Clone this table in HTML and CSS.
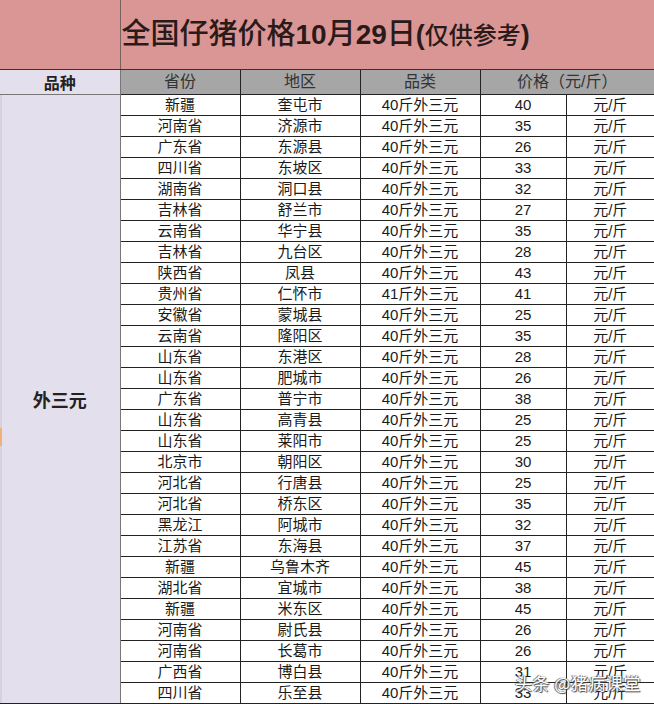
FILE: index.html
```html
<!DOCTYPE html>
<html lang="zh">
<head>
<meta charset="utf-8">
<title>全国仔猪价格</title>
<link rel="stylesheet" href="styles.css">
</head>
<body>
<div class="sheet">
<table class="grid">
<colgroup>
<col class="c1"><col class="c2"><col class="c3"><col class="c4"><col class="c5"><col class="c6">
</colgroup>
<tr class="title-row">
<td class="title-left"></td>
<td class="title" colspan="5"><span class="t-cjk">全国仔猪价格</span><b class="t-num">10</b><span class="t-cjk">月</span><b class="t-num">29</b><span class="t-cjk">日</span><b class="t-par">(</b><span class="t-small">仅供参考</span><b class="t-par">)</b></td>
</tr>
<tr class="head-row">
<td class="kind-head">品种</td>
<td class="head">省份</td>
<td class="head">地区</td>
<td class="head">品类</td>
<td class="head" colspan="2">价格（元/斤）</td>
</tr>
<tr><td class="kind" rowspan="29">外三元</td><td>新疆</td><td>奎屯市</td><td>40斤外三元</td><td>40</td><td>元/斤</td></tr>
<tr><td>河南省</td><td>济源市</td><td>40斤外三元</td><td>35</td><td>元/斤</td></tr>
<tr><td>广东省</td><td>东源县</td><td>40斤外三元</td><td>26</td><td>元/斤</td></tr>
<tr><td>四川省</td><td>东坡区</td><td>40斤外三元</td><td>33</td><td>元/斤</td></tr>
<tr><td>湖南省</td><td>洞口县</td><td>40斤外三元</td><td>32</td><td>元/斤</td></tr>
<tr><td>吉林省</td><td>舒兰市</td><td>40斤外三元</td><td>27</td><td>元/斤</td></tr>
<tr><td>云南省</td><td>华宁县</td><td>40斤外三元</td><td>35</td><td>元/斤</td></tr>
<tr><td>吉林省</td><td>九台区</td><td>40斤外三元</td><td>28</td><td>元/斤</td></tr>
<tr><td>陕西省</td><td>凤县</td><td>40斤外三元</td><td>43</td><td>元/斤</td></tr>
<tr><td>贵州省</td><td>仁怀市</td><td>41斤外三元</td><td>41</td><td>元/斤</td></tr>
<tr><td>安徽省</td><td>蒙城县</td><td>40斤外三元</td><td>25</td><td>元/斤</td></tr>
<tr><td>云南省</td><td>隆阳区</td><td>40斤外三元</td><td>35</td><td>元/斤</td></tr>
<tr><td>山东省</td><td>东港区</td><td>40斤外三元</td><td>28</td><td>元/斤</td></tr>
<tr><td>山东省</td><td>肥城市</td><td>40斤外三元</td><td>26</td><td>元/斤</td></tr>
<tr><td>广东省</td><td>普宁市</td><td>40斤外三元</td><td>38</td><td>元/斤</td></tr>
<tr><td>山东省</td><td>高青县</td><td>40斤外三元</td><td>25</td><td>元/斤</td></tr>
<tr><td>山东省</td><td>莱阳市</td><td>40斤外三元</td><td>25</td><td>元/斤</td></tr>
<tr><td>北京市</td><td>朝阳区</td><td>40斤外三元</td><td>30</td><td>元/斤</td></tr>
<tr><td>河北省</td><td>行唐县</td><td>40斤外三元</td><td>25</td><td>元/斤</td></tr>
<tr><td>河北省</td><td>桥东区</td><td>40斤外三元</td><td>35</td><td>元/斤</td></tr>
<tr><td>黑龙江</td><td>阿城市</td><td>40斤外三元</td><td>32</td><td>元/斤</td></tr>
<tr><td>江苏省</td><td>东海县</td><td>40斤外三元</td><td>37</td><td>元/斤</td></tr>
<tr><td>新疆</td><td>乌鲁木齐</td><td>40斤外三元</td><td>45</td><td>元/斤</td></tr>
<tr><td>湖北省</td><td>宜城市</td><td>40斤外三元</td><td>38</td><td>元/斤</td></tr>
<tr><td>新疆</td><td>米东区</td><td>40斤外三元</td><td>45</td><td>元/斤</td></tr>
<tr><td>河南省</td><td>尉氏县</td><td>40斤外三元</td><td>26</td><td>元/斤</td></tr>
<tr><td>河南省</td><td>长葛市</td><td>40斤外三元</td><td>26</td><td>元/斤</td></tr>
<tr><td>广西省</td><td>博白县</td><td>40斤外三元</td><td>31</td><td>元/斤</td></tr>
<tr><td>四川省</td><td>乐至县</td><td>40斤外三元</td><td>33</td><td>元/斤</td></tr>
</table>
<div class="edge-strip"></div>
<div class="edge-mark"></div>
<div class="watermark">头条 @猪病课堂</div>
</div>
</body>
</html>
```
FILE: styles.css
```css
html, body {
  margin: 0;
  padding: 0;
  background: #ffffff;
}
.sheet {
  position: relative;
  width: 654px;
  height: 704px;
  overflow: hidden;
}
.grid {
  border-collapse: collapse;
  table-layout: fixed;
  width: 654px;
  font-family: "Liberation Sans", "Noto Sans CJK SC", sans-serif;
  font-size: 15px;
  color: #1a1a1a;
}
.c1, .c2, .c3, .c4 { width: 120px; }
.c5 { width: 86px; }
.c6 { width: 88px; }
.grid td {
  padding: 0;
  height: 20px;
  line-height: 20px;
  text-align: center;
  border: 1px solid #222;
  white-space: nowrap;
  overflow: hidden;
}
.grid td:first-child { border-left: none; }
.title-row td {
  height: 68px;
  background: #da9694;
  border-top: none;
  border-bottom: 1px solid #333;
}
.grid td.title-left {
  border-right: 1px solid #7a6060;
}
.grid td.title {
  text-align: left;
  padding-left: 1px;
  padding-top: 1px;
  border-right: none;
  color: #2a1a1a;
  line-height: 30px;
}
.t-cjk {
  font-family: "Noto Sans CJK SC", sans-serif;
  font-size: 29px;
  font-weight: 500;
}
.t-num {
  font-family: "Liberation Sans", sans-serif;
  font-size: 28px;
  font-weight: 700;
}
.t-par {
  font-family: "Liberation Sans", sans-serif;
  font-size: 27px;
  font-weight: 700;
}
.t-small {
  font-family: "Noto Sans CJK SC", sans-serif;
  font-size: 24px;
  font-weight: 500;
}
.grid .head-row td {
  height: 24px;
  line-height: 24px;
}
.head {
  background: #a6a6a6;
  color: #333;
  font-size: 16px;
}
.grid td.kind-head {
  background: #e4dfec;
  font-family: "Noto Sans CJK SC", sans-serif;
  font-weight: 700;
  font-size: 16px;
  color: #222;
  border-bottom: 1px solid #777;
  border-right: 1px solid #777;
}
.grid td.kind {
  background: #e4dfec;
  font-family: "Noto Sans CJK SC", sans-serif;
  font-weight: 700;
  font-size: 18px;
  color: #222;
  border-right: 1px solid #777;
  border-top: 1px solid #777;
}
.grid td:last-child { border-right: none; }
.edge-strip {
  position: absolute;
  left: 0;
  top: 95px;
  width: 2px;
  height: 608px;
  background: #d6d2dc;
}
.edge-mark {
  position: absolute;
  left: 0;
  top: 428px;
  width: 2px;
  height: 18px;
  background: #f0b07a;
}
.watermark {
  position: absolute;
  left: 515px;
  top: 670px;
  font-family: "Noto Sans CJK SC", sans-serif;
  font-size: 17px;
  color: #ffffff;
  letter-spacing: 0.5px;
  text-shadow: 0 0 1px #555, 1px 1px 1px #444, -1px 0 1px #666;
}
```
